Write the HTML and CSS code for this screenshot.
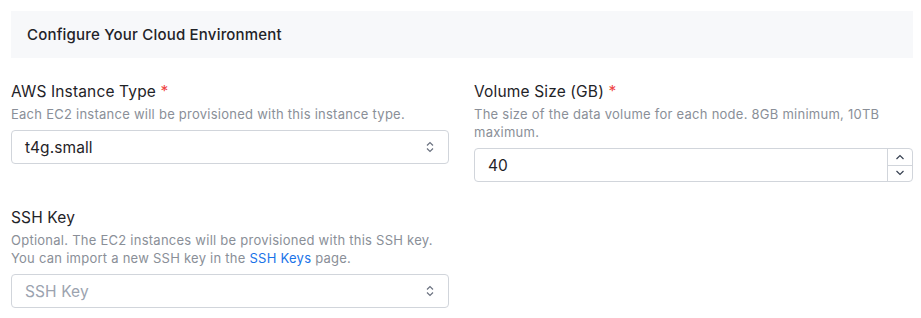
FILE: index.html
```html
<!DOCTYPE html>
<html lang="en">
<head>
  <meta charset="UTF-8" />
  <title>Configure Your Cloud Environment</title>
  <link rel="stylesheet" href="styles.css">
</head>
<body>

  <div class="section-head">Configure Your Cloud Environment</div>

  <div class="form-grid">
    <div class="field">
      <label class="field-label">AWS Instance Type <span class="req">*</span></label>
      <p class="help">Each EC2 instance will be provisioned with this instance type.</p>
      <div class="select">
        <span>t4g.small</span>
        <svg class="chev" width="10" height="12" viewBox="0 0 10 12"><path d="M2 4.5 L5 1.5 L8 4.5 M2 7.5 L5 10.5 L8 7.5" fill="none" stroke="#6b7280" stroke-width="1.2"/></svg>
      </div>
    </div>

    <div class="field">
      <label class="field-label">Volume Size (GB) <span class="req">*</span></label>
      <p class="help">The size of the data volume for each node. 8GB minimum, 10TB maximum.</p>
      <div class="number">
        <span class="number-value">40</span>
        <div class="spin">
          <div class="spin-btn"><svg width="10" height="6" viewBox="0 0 10 6"><path d="M1.5 5 L5 1.5 L8.5 5" fill="none" stroke="#374151" stroke-width="1.2"/></svg></div>
          <div class="spin-btn"><svg width="10" height="6" viewBox="0 0 10 6"><path d="M1.5 1 L5 4.5 L8.5 1" fill="none" stroke="#374151" stroke-width="1.2"/></svg></div>
        </div>
      </div>
    </div>

    <div class="field">
      <label class="field-label">SSH Key</label>
      <p class="help">Optional. The EC2 instances will be provisioned with this SSH key. You can import a new SSH key in the <a href="#">SSH Keys</a> page.</p>
      <div class="select placeholder">
        <span>SSH Key</span>
        <svg class="chev" width="10" height="12" viewBox="0 0 10 12"><path d="M2 4.5 L5 1.5 L8 4.5 M2 7.5 L5 10.5 L8 7.5" fill="none" stroke="#6b7280" stroke-width="1.2"/></svg>
      </div>
    </div>
  </div>

</body>
</html>
```

FILE: styles.css
```css
body {
  font-family: Inter, "Noto Sans", sans-serif;
  margin: 0;
  padding: 11px 8px 11px 11px;
  color: #1f2328;
}

.section-head {
  background-color: #f7f8fa;
  height: 47px;
  line-height: 47px;
  padding-left: 16px;
  font-size: 15px;
  font-weight: 500;
  letter-spacing: 0.2px;
}

.form-grid {
  display: grid;
  grid-template-columns: 438px 1fr;
  column-gap: 25px;
  row-gap: 25px;
  margin-top: 23px;
}

.field-label {
  display: block;
  font-size: 15.5px;
  line-height: 22px;
  font-weight: 400;
  letter-spacing: 0.15px;
}

.req {
  color: #ef4444;
}

.help {
  margin: 2px 0 7px;
  font-size: 13px;
  line-height: 18px;
  letter-spacing: 0.25px;
  color: #8a8f98;
}

.help a {
  color: #1a73e8;
  text-decoration: none;
}

.select,
.number {
  box-sizing: border-box;
  height: 34px;
  border: 1px solid #d1d5db;
  border-radius: 4px;
  display: flex;
  align-items: center;
  font-size: 15.5px;
  letter-spacing: 0.1px;
}

.select {
  justify-content: space-between;
  padding: 0 13px 0 13px;
}

.placeholder span {
  color: #9ca3af;
}

.number {
  padding-left: 13px;
  justify-content: space-between;
}

.spin {
  display: flex;
  flex-direction: column;
  align-self: stretch;
  width: 24px;
  border-left: 1px solid #d1d5db;
}

.spin-btn {
  flex: 1;
  display: flex;
  align-items: center;
  justify-content: center;
}

.spin-btn + .spin-btn {
  border-top: 1px solid #d1d5db;
}
```
